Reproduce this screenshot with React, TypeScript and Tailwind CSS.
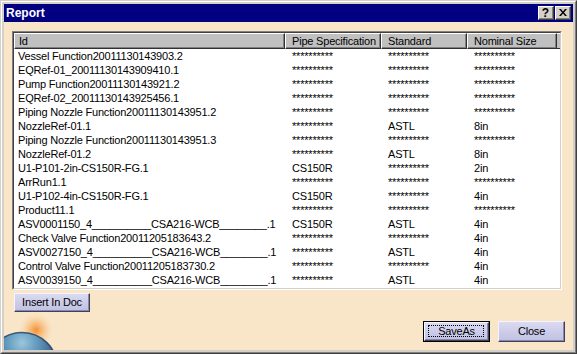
import React from "react";

const S = "**********";

const rows: [string, string, string, string][] = [
  ["Vessel Function20011130143903.2", S, S, S],
  ["EQRef-01_20011130143909410.1", S, S, S],
  ["Pump Function20011130143921.2", S, S, S],
  ["EQRef-02_20011130143925456.1", S, S, S],
  ["Piping Nozzle Function20011130143951.2", S, S, S],
  ["NozzleRef-01.1", S, "ASTL", "8in"],
  ["Piping Nozzle Function20011130143951.3", S, S, S],
  ["NozzleRef-01.2", S, "ASTL", "8in"],
  ["U1-P101-2in-CS150R-FG.1", "CS150R", S, "2in"],
  ["ArrRun1.1", S, S, S],
  ["U1-P102-4in-CS150R-FG.1", "CS150R", S, "4in"],
  ["Product11.1", S, S, S],
  ["ASV0001150_4__________CSA216-WCB________.1", "CS150R", "ASTL", "4in"],
  ["Check Valve Function20011205183643.2", S, S, "4in"],
  ["ASV0027150_4__________CSA216-WCB________.1", S, "ASTL", "4in"],
  ["Control Valve Function20011205183730.2", S, S, "4in"],
  ["ASV0039150_4__________CSA216-WCB________.1", S, "ASTL", "4in"],
];

const headers = ["Id", "Pipe Specification", "Standard", "Nominal Size"];

function HeaderCell({ label, first }: { label: string; first?: boolean }) {
  return (
    <div
      className={`h-[16px] bg-[#c0c0c0] border-t border-l border-t-white border-l-white border-r border-b border-r-[#303030] border-b-[#303030] shadow-[inset_-1px_-1px_0_#808080] leading-[15px] whitespace-nowrap overflow-hidden ${
        first ? "pl-[4px]" : "pl-[6px]"
      }`}
    >
      {label}
    </div>
  );
}

function LavButton({ label, def, w, h }: { label: string; def?: boolean; w: string; h: string }) {
  return (
    <div className={`${w} ${h} ${def ? "border border-black" : ""}`}>
      <div className="relative h-full w-full bg-gradient-to-b from-[#dadaf2] to-[#c0c0e2] border-t border-l border-t-[#f4f4ff] border-l-[#f4f4ff] border-r border-b border-r-[#404058] border-b-[#404058] shadow-[inset_-1px_-1px_0_#8888aa] flex items-center justify-center">
        {def && <div className="absolute left-[3px] right-[4px] top-[2px] bottom-[3px] border border-dotted border-black" />}
        <span className="leading-[13px]">{label}</span>
      </div>
    </div>
  );
}

export default function App() {
  return (
    <div className="w-[577px] h-[354px] font-['Liberation_Sans',Arial,sans-serif] text-[11px] text-black tracking-[-0.2px] select-none">
      <div className="w-full h-full border-t border-l border-t-[#d4d0c8] border-l-[#d4d0c8] border-r border-b border-r-[#404040] border-b-[#404040]">
        <div className="w-full h-full border-t border-l border-t-white border-l-white border-r border-b border-r-[#808080] border-b-[#808080] bg-[#d4d0c8] p-[2px] flex flex-col">
          {/* Title bar */}
          <div className="h-[18px] bg-[#000080] flex items-center justify-between pl-[2px] pr-[2px] shrink-0">
            <span className="text-white font-bold text-[12px] tracking-[0px] leading-[18px]">Report</span>
            <div className="flex gap-[1px] items-center">
              <div className="w-[16px] h-[14px] bg-[#d4d0c8] border-t border-l border-t-white border-l-white border-r border-b border-r-[#404040] border-b-[#404040] shadow-[inset_-1px_-1px_0_#808080] flex items-center justify-center">
                <span className="font-bold text-[12px] leading-[12px] tracking-[0px] -ml-[1px]">?</span>
              </div>
              <div className="w-[16px] h-[14px] bg-[#d4d0c8] border-t border-l border-t-white border-l-white border-r border-b border-r-[#404040] border-b-[#404040] shadow-[inset_-1px_-1px_0_#808080] flex items-center justify-center">
                <svg width="8" height="7" viewBox="0 0 8 7" className="-ml-[1px] -mt-[1px]">
                  <path d="M0 0h2l2 2.5 2-2.5h2l-3 3.5 3 3.5h-2l-2-2.5-2 2.5h-2l3-3.5z" fill="#000" />
                </svg>
              </div>
            </div>
          </div>
          {/* Client */}
          <div className="relative flex-1 bg-[#f9e6c9] flex flex-col overflow-hidden">
            <svg className="absolute left-0 bottom-0" width="70" height="48" viewBox="0 0 70 48">
              <defs>
                <radialGradient id="glow" cx="0.5" cy="0.5" r="0.5">
                  <stop offset="0" stopColor="#f48a28" stopOpacity="0.95" />
                  <stop offset="0.45" stopColor="#f7ab5c" stopOpacity="0.5" />
                  <stop offset="1" stopColor="#f9e6c9" stopOpacity="0" />
                </radialGradient>
                <radialGradient id="globe" cx="0.5" cy="0.15" r="0.7">
                  <stop offset="0" stopColor="#9cc6dc" />
                  <stop offset="0.25" stopColor="#6aa2c4" />
                  <stop offset="0.6" stopColor="#3e6c92" />
                  <stop offset="1" stopColor="#1f3550" />
                </radialGradient>
              </defs>
              <circle cx="32" cy="28" r="19" fill="url(#glow)" />
              <circle cx="18" cy="66" r="36" fill="url(#globe)" />
              <circle cx="18" cy="66" r="35.5" fill="none" stroke="#2a4462" strokeWidth="1.5" opacity="0.8" />
            </svg>

            {/* List */}
            <div className="relative ml-[8px] mt-[9px] w-[550px] h-[259px] border-t border-l border-t-[#808080] border-l-[#808080] border-r border-b border-r-white border-b-white">
              <div className="w-full h-full border-t border-l border-t-[#404040] border-l-[#404040] border-r border-b border-r-[#d4d0c8] border-b-[#d4d0c8] bg-white overflow-hidden">
                <div className="grid grid-cols-[271px_96px_86px_90px_1fr]">
                  {headers.map((h, i) => (
                    <HeaderCell key={h} label={h} first={i === 0} />
                  ))}
                  <div className="h-[16px] bg-[#c0c0c0] border-t border-t-white border-b border-b-[#303030]" />
                </div>
                {rows.map((r, i) => (
                  <div key={i} className="grid grid-cols-[271px_96px_86px_90px_1fr] h-[14px] leading-[14px] whitespace-nowrap">
                    <div className="pl-[4px] overflow-hidden">{r[0]}</div>
                    <div className="pl-[7px] overflow-hidden">{r[1]}</div>
                    <div className="pl-[7px] overflow-hidden">{r[2]}</div>
                    <div className="pl-[7px] overflow-hidden">{r[3]}</div>
                    <div />
                  </div>
                ))}
              </div>
            </div>

            <div className="relative ml-[10px] mt-[3px]">
              <LavButton label="Insert In Doc" w="w-[76px]" h="h-[19px]" />
            </div>

            <div className="relative mt-[9px] flex justify-end gap-[8px] pr-[8px]">
              <LavButton label="SaveAs" def w="w-[67px]" h="h-[21px]" />
              <LavButton label="Close" w="w-[67px]" h="h-[21px]" />
            </div>
          </div>
        </div>
      </div>
    </div>
  );
}
